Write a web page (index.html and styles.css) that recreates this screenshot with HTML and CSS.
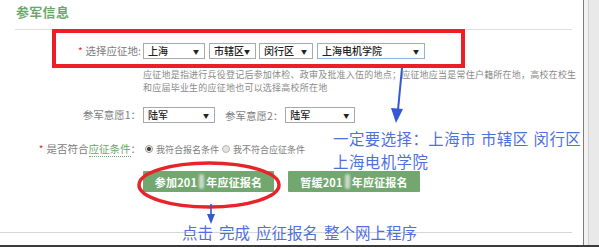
FILE: index.html
```html
<!DOCTYPE html>
<html lang="zh-CN">
<head>
<meta charset="utf-8">
<title>参军信息</title>
<link rel="stylesheet" href="styles.css">
</head>
<body>
<div class="screen">
  <div class="main">
    <h2 class="title">参军信息</h2>
    <div class="rule"></div>
    <div class="form">
      <div class="row r1">
        <div class="lbl"><span class="req">*</span>选择应征地:</div>
        <div class="fields">
          <span class="sel s1"><b>上海</b><i>▼</i></span>
          <span class="sel s2"><b>市辖区</b><i>▼</i></span>
          <span class="sel s3"><b>闵行区</b><i>▼</i></span>
          <span class="sel s4 focus"><b>上海电机学院</b><i>▼</i></span>
        </div>
      </div>
      <div class="help">应征地是指进行兵役登记后参加体检、政审及批准入伍的地点；应征地应当是常住户籍所在地，高校在校生<br>和应届毕业生的应征地也可以选择高校所在地</div>
      <div class="row r2">
        <div class="lbl">参军意愿1：</div>
        <div class="fields">
          <span class="sel s5"><b>陆军</b><i>▼</i></span>
          <span class="lbl2">参军意愿2：</span>
          <span class="sel s6"><b>陆军</b><i>▼</i></span>
        </div>
      </div>
      <div class="row r3">
        <div class="lbl"><span class="req">*</span>是否符合<span class="link">应征条件</span>：</div>
        <div class="fields radios">
          <span class="radio on"></span><span class="rtxt">我符合报名条件</span>
          <span class="radio"></span><span class="rtxt">我不符合应征条件</span>
        </div>
      </div>
      <div class="btns">
        <span class="btn b1">参加201<span class="blur"></span>年应征报名</span>
        <span class="btn b2">暂缓201<span class="blur"></span>年应征报名</span>
      </div>
    </div>
    <div class="rule bottom"></div>

    <div class="redbox"></div>
    <svg class="marks" width="584" height="245" viewBox="0 0 584 245">
      <ellipse cx="209" cy="185" rx="70" ry="22" fill="none" stroke="#e8242b" stroke-width="3.5"/>
      <line x1="402" y1="68" x2="398" y2="110" stroke="#3458d6" stroke-width="2"/>
      <polygon points="391,108 403,109 396,123" fill="#3458d6"/>
      <line x1="211" y1="204" x2="211" y2="215" stroke="#3458d6" stroke-width="1.6"/>
      <polygon points="207,214 215,214 211,224" fill="#3458d6"/>
    </svg>
    <div class="note n1">一定要选择：上海市 市辖区 闵行区<br>上海电机学院</div>
    <div class="note n2">点击 完成 应征报名 整个网上程序</div>
  </div>
  <div class="scroll"><div class="track"></div></div>
</div>
<div class="taskbar"></div>
</body>
</html>
```
FILE: styles.css
```css
* { box-sizing: border-box; }
html, body { margin: 0; padding: 0; }
body {
  width: 599px;
  height: 247px;
  overflow: hidden;
  background: #fff;
  font-family: "Noto Sans CJK SC", "Noto Sans", sans-serif;
  color: #777;
}
.screen {
  display: flex;
  height: 245px;
}
.main {
  position: relative;
  width: 584px;
  height: 245px;
  border-right: 1px solid #7c7c7c;
}
.scroll {
  flex: 1;
  background: #f2f2f2;
  padding-left: 4px;
}
.track {
  height: 100%;
  border-left: 1px solid #d0d0d0;
  background: #e9e9e9;
}
.taskbar {
  height: 2px;
  background: #3a3a3a;
}
.title {
  margin: 0;
  padding: 4px 0 0 16px;
  height: 29px;
  font-size: 13px;
  line-height: 16px;
  font-weight: 700;
  color: #6da66b;
  letter-spacing: 0.3px;
}
.rule {
  margin-left: 15px;
  width: 557px;
  height: 1px;
  background: #dedede;
}
.rule.bottom {
  margin-left: 0;
  width: 572px;
  margin-top: 40px;
  background: #d6d6d6;
}
.form {
  padding-top: 13px;
}
.row {
  display: grid;
  grid-template-columns: 141px auto;
  column-gap: 2px;
  align-items: center;
}
.lbl {
  text-align: right;
  font-size: 10.5px;
  line-height: 14px;
  color: #7d7d7d;
  white-space: nowrap;
}
.req {
  color: #e8242b;
  margin-right: 3px;
  font-size: 10px;
}
.fields {
  display: flex;
  align-items: center;
  gap: 3px;
}
.sel {
  display: flex;
  align-items: center;
  justify-content: space-between;
  height: 16px;
  padding: 0 5px 0 4px;
  border: 1px solid #a9a9a9;
  background: #fff;
  color: #222;
}
.sel b {
  font-weight: 500;
  font-size: 10px;
  line-height: 14px;
}
.sel i {
  font-style: normal;
  font-size: 6px;
  color: #222;
}
.sel.focus { border-color: #8fb0dc; }
.s1 { width: 62px; }
.s2 { width: 47px; margin-left: 1px; }
.s3 { width: 54px; }
.s4 { width: 108px; margin-left: 1px; }
.s5 { width: 72px; }
.s6 { width: 70px; }
.lbl2 {
  font-size: 10.5px;
  color: #7d7d7d;
  margin-left: 7px;
  margin-right: -1px;
}
.help {
  margin: 9px 0 0 143px;
  height: 26px;
  font-size: 9px;
  line-height: 13.1px;
  letter-spacing: 0.22px;
  color: #8a8a8a;
  white-space: nowrap;
}
.r2 { margin-top: 13px; height: 16px; }
.r3 { margin-top: 19px; height: 14px; }
.link {
  color: #6da66b;
  border-bottom: 1px dotted #6da66b;
}
.radios { gap: 0; }
.radio {
  width: 8px;
  height: 8px;
  border-radius: 50%;
  border: 1px solid #b5b5b5;
  background: #e4e4e4;
  margin: 0 3px 0 2px;
}
.radio.on {
  background: radial-gradient(circle, #444 0 1.8px, #f4f4f4 2.3px);
  border-color: #999;
}
.rtxt {
  font-size: 9px;
  color: #7d7d7d;
  margin-right: 1px;
}
.btns {
  display: flex;
  gap: 14px;
  margin: 15px 0 0 143px;
}
.btn {
  display: flex;
  align-items: center;
  justify-content: center;
  height: 21px;
  width: 131px;
  background: #72a86f;
  color: #fff;
  font-size: 11px;
  font-weight: 700;
  border-radius: 1px;
  letter-spacing: 0.2px;
}
.b2 { width: 132px; }
.blur {
  display: inline-block;
  width: 5px;
  height: 15px;
  margin: 0 2px;
  border-radius: 3px;
  background: #c9d9c8;
  filter: blur(0.8px);
}
.redbox {
  position: absolute;
  left: 52px;
  top: 29px;
  width: 413px;
  height: 39px;
  border: 4px solid #ec1f27;
}
.marks {
  position: absolute;
  left: 0;
  top: 0;
}
.note {
  position: absolute;
  color: #4e6fde;
  white-space: nowrap;
}
.n1 {
  left: 333px;
  top: 127px;
  font-size: 15.4px;
  line-height: 22.5px;
  letter-spacing: 0.5px;
  word-spacing: 1px;
}
.n2 {
  left: 182px;
  top: 223px;
  font-size: 15.5px;
  line-height: 18px;
  word-spacing: 2.5px;
}
```
